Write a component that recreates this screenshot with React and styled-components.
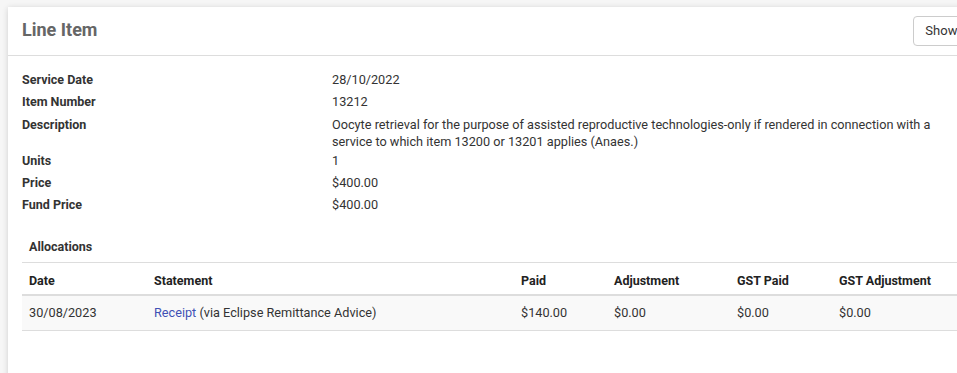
import React from 'react'
import styled, { createGlobalStyle } from 'styled-components';

const GlobalStyle = createGlobalStyle`
  html, body {
    margin: 0;
    padding: 0;
    overflow: hidden;
    background: #f6f6f6;
    font-family: Roboto, "Liberation Sans", sans-serif;
    font-size: 12.7px;
    color: #333;
  }
`;

const Page = styled.div`
  padding: 7px 0 0 8px;
  height: 373px;
  box-sizing: border-box;
`

const Card = styled.div`
  width: 1020px;
  min-height: 400px;
  background: #fff;
  box-shadow: 0 1px 6px rgba(0, 0, 0, 0.16);
`

const CardHeader = styled.div`
  display: flex;
  align-items: center;
  justify-content: space-between;
  height: 48px;
  padding: 0 14px;
  border-bottom: 1px solid #ddd;
`

const Title = styled.h2`
  margin: 0 0 4px;
  font-size: 18px;
  font-weight: 700;
  color: #666;
`

const Button = styled.button`
  height: 30px;
  padding: 0 11px;
  margin-bottom: 1px;
  background: #fff;
  border: 1px solid #ccc;
  border-radius: 4px;
  font-family: inherit;
  font-size: 13px;
  color: #333;
  cursor: pointer;
`

const CardBody = styled.div`
  padding: 13px 14px 20px;
`

const DetailRow = styled.div`
  display: grid;
  grid-template-columns: 310px minmax(0, 620px);
  padding: ${p => (p.$tight ? '3px 0 0' : '2px 0')};
  line-height: ${p => (p.$tight ? '17px' : '18px')};
`

const Label = styled.div`
  font-weight: 700;
  font-size: 12.5px;
  color: #333;
`

const Value = styled.div`
  color: #333;
`

const SectionTitle = styled.h4`
  margin: 22px 0 6px;
  padding: 0 7px;
  font-size: 12.5px;
  line-height: 18px;
  font-weight: 700;
  color: #333;
`

const Table = styled.table`
  width: 100%;
  border-collapse: collapse;
  table-layout: fixed;
  border-top: 1px solid #ddd;
`

const Th = styled.th`
  text-align: left;
  padding: 9px 7px 4px;
  line-height: 18px;
  font-size: 12.5px;
  font-weight: 700;
  color: #222;
  border-bottom: 2px solid #ddd;
`

const Td = styled.td`
  padding: 8px 7px;
  line-height: 18px;
  color: #333;
  background: #f9f9f9;
  border-bottom: 1px solid #ddd;
`

const Link = styled.a`
  color: #3f51b5;
  text-decoration: none;
`

const details = [
  ['Service Date', '28/10/2022'],
  ['Item Number', '13212'],
  ['Description', 'Oocyte retrieval for the purpose of assisted reproductive technologies-only if rendered in connection with a service to which item 13200 or 13201 applies (Anaes.)', true],
  ['Units', '1'],
  ['Price', '$400.00'],
  ['Fund Price', '$400.00'],
]

const columns = [
  ['Date', 125],
  ['Statement', 367],
  ['Paid', 93],
  ['Adjustment', 123],
  ['GST Paid', 102],
  ['GST Adjustment', null],
]

const App = () => {
  return (
    <React.Fragment>
      <GlobalStyle />
      <Page>
        <Card>
          <CardHeader>
            <Title>Line Item</Title>
            <Button>Show History</Button>
          </CardHeader>
          <CardBody>
            {details.map(([label, value, tight]) => (
              <DetailRow key={label} $tight={tight}>
                <Label>{label}</Label>
                <Value>{value}</Value>
              </DetailRow>
            ))}
            <SectionTitle>Allocations</SectionTitle>
            <Table>
              <colgroup>
                {columns.map(([name, width]) => (
                  <col key={name} style={width ? { width } : undefined} />
                ))}
              </colgroup>
              <thead>
                <tr>
                  {columns.map(([name]) => <Th key={name}>{name}</Th>)}
                </tr>
              </thead>
              <tbody>
                <tr>
                  <Td>30/08/2023</Td>
                  <Td><Link href="#">Receipt</Link> (via Eclipse Remittance Advice)</Td>
                  <Td>$140.00</Td>
                  <Td>$0.00</Td>
                  <Td>$0.00</Td>
                  <Td>$0.00</Td>
                </tr>
              </tbody>
            </Table>
          </CardBody>
        </Card>
      </Page>
    </React.Fragment>
  )
}

export default App
